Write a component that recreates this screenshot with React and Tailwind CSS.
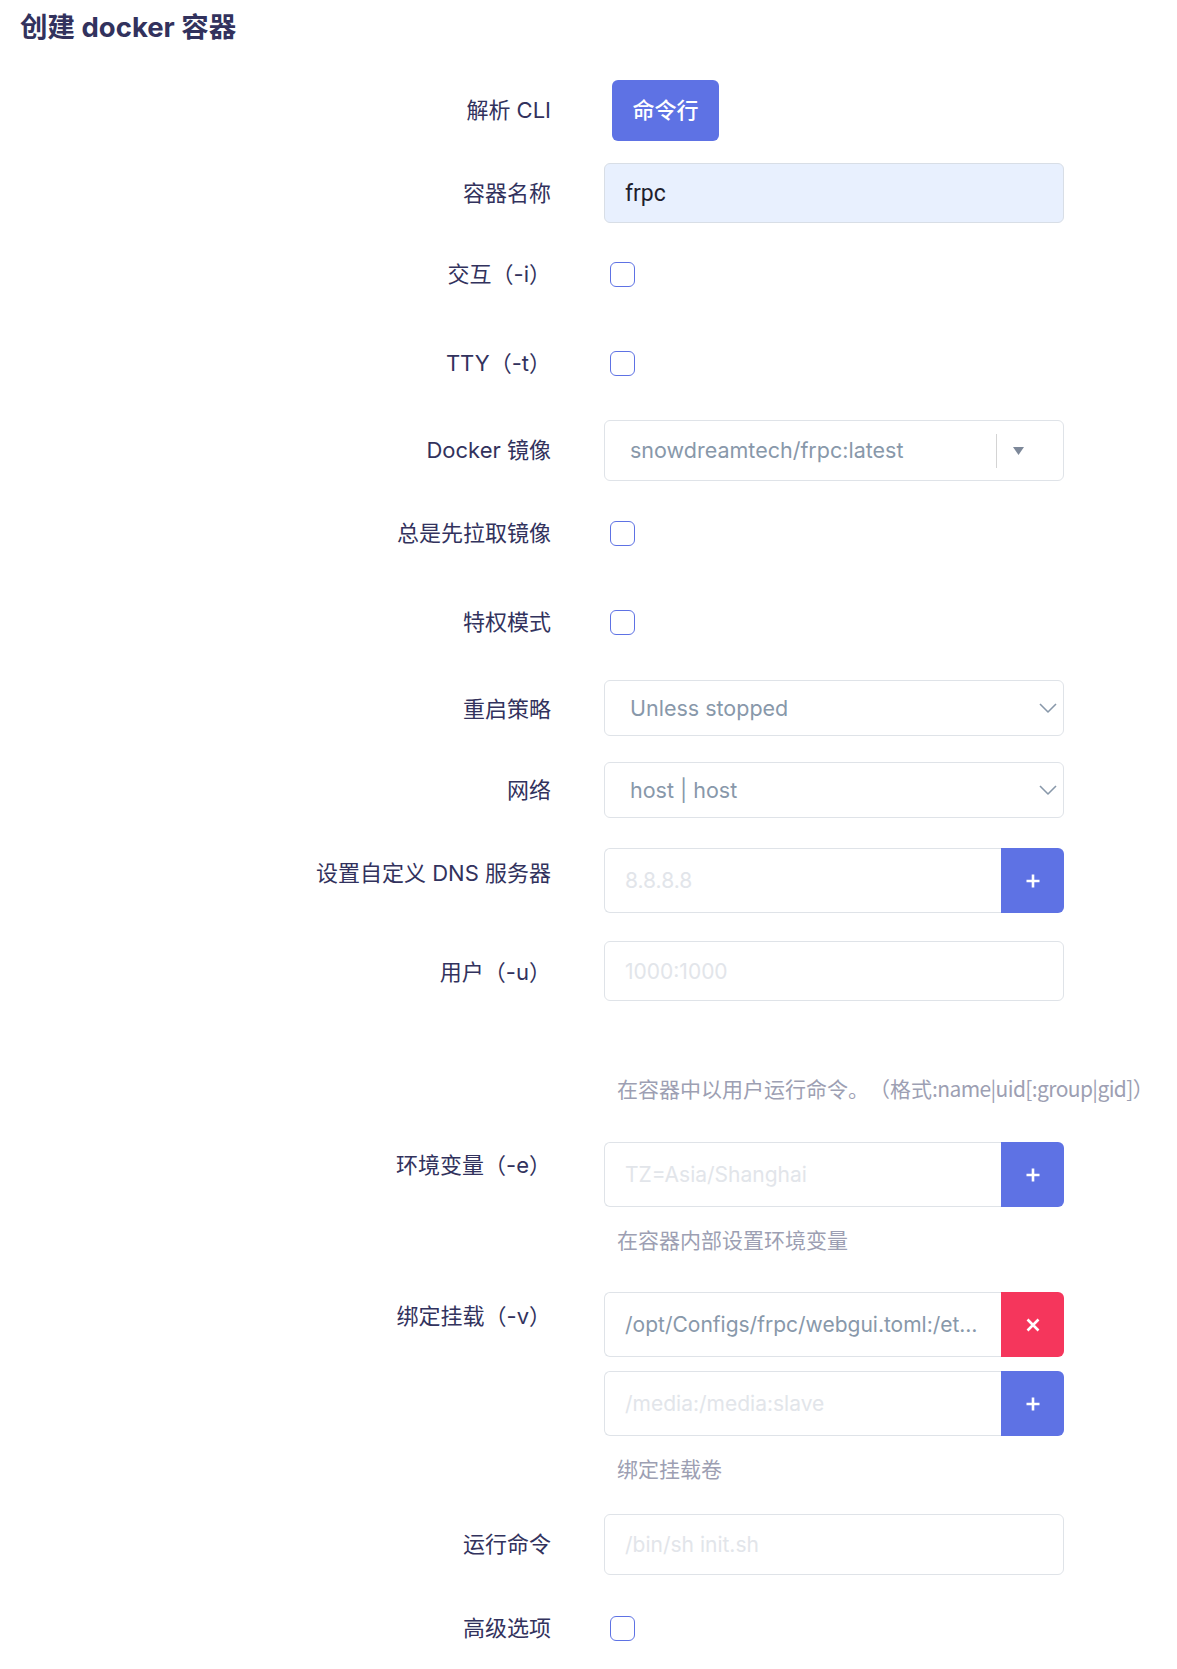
import React from "react";

const FONT = "font-['Inter','Noto_Sans_CJK_SC',sans-serif]";

function Label({ children, pt = "pt-[15px]" }) {
  return (
    <div className={`w-[551px] shrink-0 text-right text-[22px] leading-[30px] text-[#32325d] ${pt}`}>
      {children}
    </div>
  );
}

function Checkbox() {
  return (
    <span className="ml-[6px] block h-[25px] w-[25px] rounded-[6px] border-[1.5px] border-[#5e72e4] bg-white" />
  );
}

function PlusIcon() {
  return (
    <svg width="16" height="16" viewBox="0 0 16 16" fill="none">
      <path d="M8 1.5v13M1.5 8h13" stroke="white" strokeWidth="2.6" strokeLinecap="butt" />
    </svg>
  );
}

function XIcon() {
  return (
    <svg width="14" height="14" viewBox="0 0 14 14" fill="none">
      <path d="M1.5 1.5l11 11M12.5 1.5l-11 11" stroke="white" strokeWidth="2.6" />
    </svg>
  );
}

function Chevron() {
  return (
    <svg width="18" height="10" viewBox="0 0 18 10" fill="none">
      <path d="M1 1l8 8 8-8" stroke="#8898aa" strokeWidth="1.6" strokeLinejoin="round" />
    </svg>
  );
}

function TextInput({ placeholder, value, h = "h-[60px]" }) {
  return (
    <input
      readOnly
      placeholder={placeholder}
      value={value || ""}
      className={`${h} w-[460px] rounded-[6px] border border-[#dfe3e8] bg-white px-[20px] text-[21px] text-[#8898aa] outline-none placeholder:text-[#e2e5ea]`}
    />
  );
}

function Group({ placeholder, value, danger }) {
  return (
    <div className="flex h-[65px] w-[460px]">
      <input
        readOnly
        placeholder={placeholder}
        value={value || ""}
        className="min-w-0 flex-1 text-ellipsis rounded-l-[6px] border border-r-0 border-[#dfe3e8] bg-white pl-[20px] pr-[22px] text-[21px] text-[#8898aa] outline-none placeholder:text-[#e2e5ea]"
      />
      <button
        className={`flex w-[63px] shrink-0 items-center justify-center rounded-r-[6px] ${danger ? "bg-[#f5365c]" : "bg-[#5e72e4]"}`}
      >
        {danger ? <XIcon /> : <PlusIcon />}
      </button>
    </div>
  );
}

function Select({ value }) {
  return (
    <div className="flex h-[56px] w-[460px] items-center justify-between rounded-[6px] border border-[#dfe3e8] bg-white pl-[25px] pr-[6px]">
      <span className="text-[21.5px] text-[#8898aa]">{value}</span>
      <Chevron />
    </div>
  );
}

function Help({ children, mt }) {
  return (
    <div className={`${mt} h-[30px] whitespace-nowrap pl-[13px] font-['Noto_Sans_CJK_SC',sans-serif] text-[21px] leading-[30px] text-[#9d9fb3] [text-spacing-trim:space-all]`}>
      {children}
    </div>
  );
}

export default function App() {
  return (
    <div className={`min-h-[1669px] w-[1177px] bg-white pb-[21px] ${FONT}`}>
      <div className="flex h-[56px] items-center pl-[20px]">
        <h1 className="text-[27.5px] font-bold text-[#32325d]">创建 docker 容器</h1>
      </div>

      {/* 解析 CLI */}
      <div className="mt-[24px] flex h-[60px] gap-[53px]">
        <Label>解析 CLI</Label>
        <button className="ml-[8px] h-[61px] w-[107px] rounded-[6px] bg-[#5e72e4] text-[22px] font-medium text-white">
          命令行
        </button>
      </div>

      {/* 容器名称 */}
      <div className="mt-[23px] flex h-[60px] gap-[53px]">
        <Label>容器名称</Label>
        <input
          readOnly
          value="frpc"
          className="h-[60px] w-[460px] rounded-[6px] border border-[#d8dee6] bg-[#e8f0fe] px-[20px] font-['Roboto',sans-serif] text-[23px] text-[#1f1f2e] outline-none"
        />
      </div>

      {/* 交互 */}
      <div className="mt-[31px] flex h-[40px] items-center gap-[53px]">
        <Label pt="pt-0">交互（-i）</Label>
        <Checkbox />
      </div>

      {/* TTY */}
      <div className="mt-[49px] flex h-[40px] items-center gap-[53px]">
        <Label pt="pt-0">TTY（-t）</Label>
        <Checkbox />
      </div>

      {/* Docker 镜像 */}
      <div className="mt-[37px] flex h-[61px] gap-[53px]">
        <Label>Docker 镜像</Label>
        <div className="flex h-[61px] w-[460px] items-center rounded-[6px] border border-[#dfe3e8] bg-white pl-[25px]">
          <span className="flex-1 text-[21.5px] text-[#8898aa]">snowdreamtech/frpc:latest</span>
          <span className="block h-[34px] w-px bg-[#d4d4d4]" />
          <span className="flex w-[42px] justify-center">
            <svg width="11" height="8" viewBox="0 0 11 8">
              <path d="M0 0h11L5.5 8z" fill="#7d8899" />
            </svg>
          </span>
          <span className="w-[24px]" />
        </div>
      </div>

      {/* 总是先拉取镜像 */}
      <div className="mt-[32px] flex h-[40px] items-center gap-[53px]">
        <Label pt="pt-0">总是先拉取镜像</Label>
        <Checkbox />
      </div>

      {/* 特权模式 */}
      <div className="mt-[49px] flex h-[40px] items-center gap-[53px]">
        <Label pt="pt-0">特权模式</Label>
        <Checkbox />
      </div>

      {/* 重启策略 */}
      <div className="mt-[38px] flex h-[56px] gap-[53px]">
        <Label pt="pt-[14px]">重启策略</Label>
        <Select value="Unless stopped" />
      </div>

      {/* 网络 */}
      <div className="mt-[26px] flex h-[56px] gap-[53px]">
        <Label pt="pt-[13px]">网络</Label>
        <Select value="host | host" />
      </div>

      {/* DNS */}
      <div className="mt-[30px] flex gap-[53px]">
        <Label pt="pt-[10px]">设置自定义 DNS 服务器</Label>
        <Group placeholder="8.8.8.8" />
      </div>

      {/* 用户 */}
      <div className="mt-[28px] flex gap-[53px]">
        <Label pt="pt-[16px]">用户（-u）</Label>
        <div className="flex flex-col">
          <TextInput placeholder="1000:1000" />
          <Help mt="mt-[72px]">
            在容器中以用户运行命令。（格式
            <span className="tracking-[-0.6px]">:name|uid[:group|gid]</span>）
          </Help>
        </div>
      </div>

      {/* 环境变量 */}
      <div className="mt-[39px] flex gap-[53px]">
        <Label pt="pt-[8px]">环境变量（-e）</Label>
        <div className="flex flex-col">
          <Group placeholder="TZ=Asia/Shanghai" />
          <Help mt="mt-[17px]">在容器内部设置环境变量</Help>
        </div>
      </div>

      {/* 绑定挂载 */}
      <div className="mt-[38px] flex gap-[53px]">
        <Label pt="pt-[9px]">绑定挂载（-v）</Label>
        <div className="flex flex-col">
          <Group value="/opt/Configs/frpc/webgui.toml:/etc/frp/frpc.toml" danger />
          <div className="mt-[14px]">
            <Group placeholder="/media:/media:slave" />
          </div>
          <Help mt="mt-[17px]">绑定挂载卷</Help>
        </div>
      </div>

      {/* 运行命令 */}
      <div className="mt-[31px] flex gap-[53px]">
        <Label>运行命令</Label>
        <TextInput placeholder="/bin/sh init.sh" h="h-[61px]" />
      </div>

      {/* 高级选项 */}
      <div className="mt-[33px] flex h-[40px] items-center gap-[53px]">
        <Label pt="pt-0">高级选项</Label>
        <Checkbox />
      </div>
    </div>
  );
}
